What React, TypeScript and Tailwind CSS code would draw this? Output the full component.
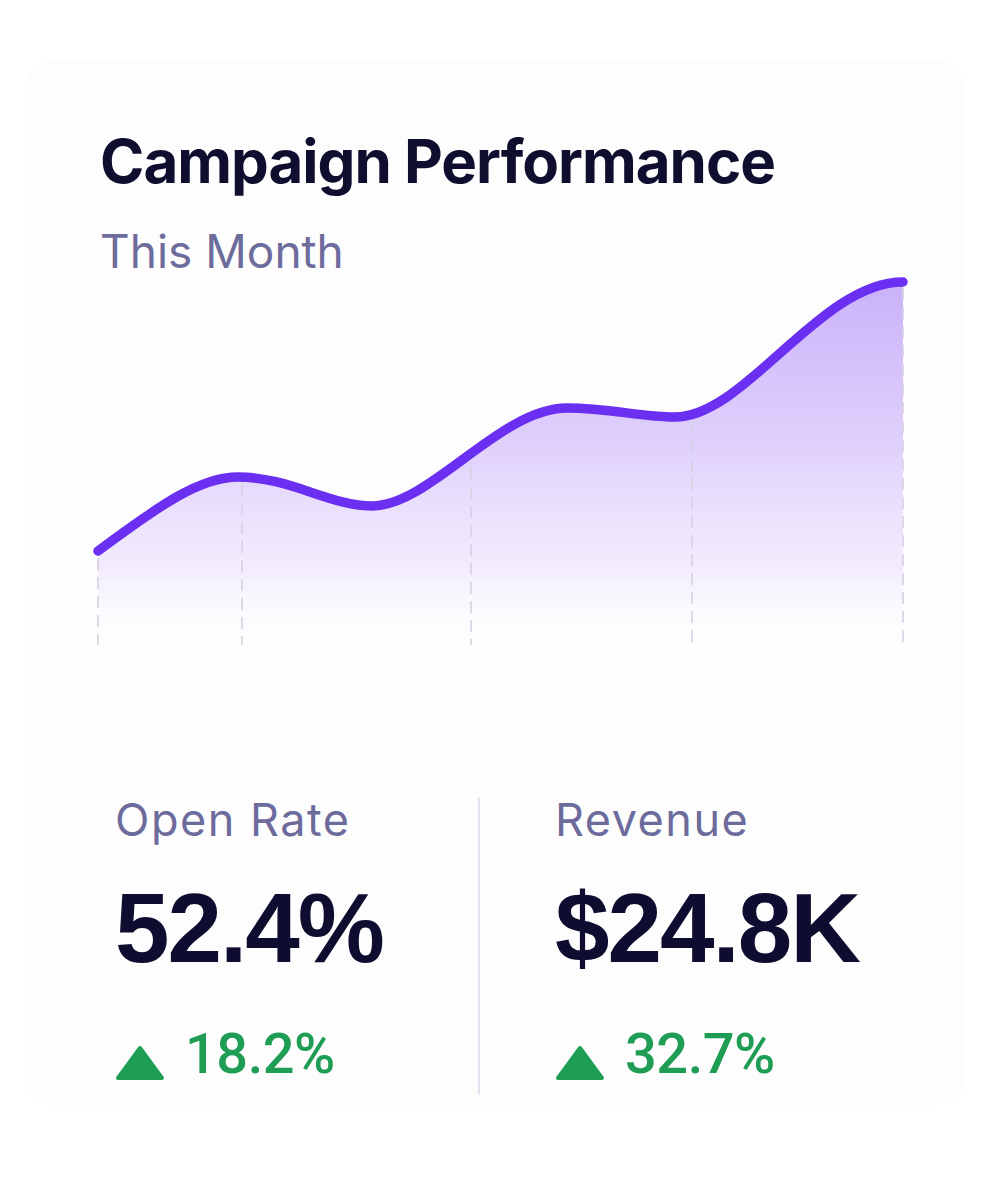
import React from "react";

const curve =
  "M98,551 C160,505 200,477 238,477 C290,477 330,506 372,506 C430,506 500,408 567,408 C610,408 640,417 675,417 C745,417 820,282 903,282";

function Chart() {
  const grid: [number, number][] = [
    [98, 558],
    [242, 484],
    [471, 468],
    [692, 421],
    [903, 288],
  ];
  return (
    <svg
      width="820"
      height="376"
      viewBox="93 274 820 376"
      className="block -ml-[7px]"
    >
      <defs>
        <linearGradient id="fillGrad" x1="0" y1="282" x2="0" y2="645" gradientUnits="userSpaceOnUse">
          <stop offset="0" stopColor="#c7adf9" stopOpacity="0.95" />
          <stop offset="0.45" stopColor="#d8c5fb" stopOpacity="0.8" />
          <stop offset="0.8" stopColor="#ece2fd" stopOpacity="0.6" />
          <stop offset="1" stopColor="#ffffff" stopOpacity="0" />
        </linearGradient>
      </defs>
      <path d={`${curve} L903,645 L98,645 Z`} fill="url(#fillGrad)" />
      {grid.map(([x, y]) => (
        <line
          key={x}
          x1={x}
          y1={y}
          x2={x}
          y2={645}
          stroke="#d5d1e2"
          strokeWidth="1.6"
          strokeDasharray="12 7"
        />
      ))}
      <path d={curve} fill="none" stroke="#6a2ff0" strokeWidth="9.5" strokeLinecap="round" />
    </svg>
  );
}

function Up() {
  return (
    <svg width="50" height="36" viewBox="0 0 50 36" className="block shrink-0">
      <path
        d="M25,3 L47,33 L3,33 Z"
        fill="#1f9d55"
        stroke="#1f9d55"
        strokeWidth="4"
        strokeLinejoin="round"
      />
    </svg>
  );
}

function Stat({ label, value, delta }: { label: string; value: string; delta: string }) {
  return (
    <div className="flex flex-col">
      <div
        className="text-[45px] leading-none text-[#6c6b9c] tracking-[1.5px]"
        style={{ fontFamily: "Inter, sans-serif" }}
      >
        {label}
      </div>
      <div
        className="mt-[37px] text-[98px] leading-none font-bold text-[#0e0d2f] tracking-[-2px]"
        style={{ fontFamily: "'Liberation Sans', Arial, sans-serif" }}
      >
        {value}
      </div>
      <div className="mt-[49px] flex items-end gap-[20px]">
        <div className="pb-[1px]">
          <Up />
        </div>
        <div
          className="text-[56px] leading-none font-medium text-[#1f9d55] tracking-[-0.5px]"
          style={{ fontFamily: "Roboto, sans-serif" }}
        >
          {delta}
        </div>
      </div>
    </div>
  );
}

export default function App() {
  return (
    <div className="w-[990px] h-[1183px] bg-white pt-[60px] px-[25px]">
      <div className="h-[1045px] rounded-[28px] bg-[#fdfdfe] pl-[75px] pt-[71px]">
        <div
          className="text-[60px] leading-none font-bold text-[#0f0e2f] tracking-[-1px]"
          style={{ fontFamily: "Inter, sans-serif" }}
        >
          Campaign Performance
        </div>
        <div
          className="mt-[37px] text-[46px] leading-none text-[#6e6c9c]"
          style={{ fontFamily: "Inter, sans-serif" }}
        >
          This Month
        </div>
        <Chart />
        <div className="mt-[147px] flex h-[298px]">
          <div className="w-[378px] pl-[15px]">
            <Stat label="Open Rate" value="52.4%" delta="18.2%" />
          </div>
          <div className="w-[2px] bg-[#e3e3ee]" />
          <div className="pl-[75px]">
            <Stat label="Revenue" value="$24.8K" delta="32.7%" />
          </div>
        </div>
      </div>
    </div>
  );
}
